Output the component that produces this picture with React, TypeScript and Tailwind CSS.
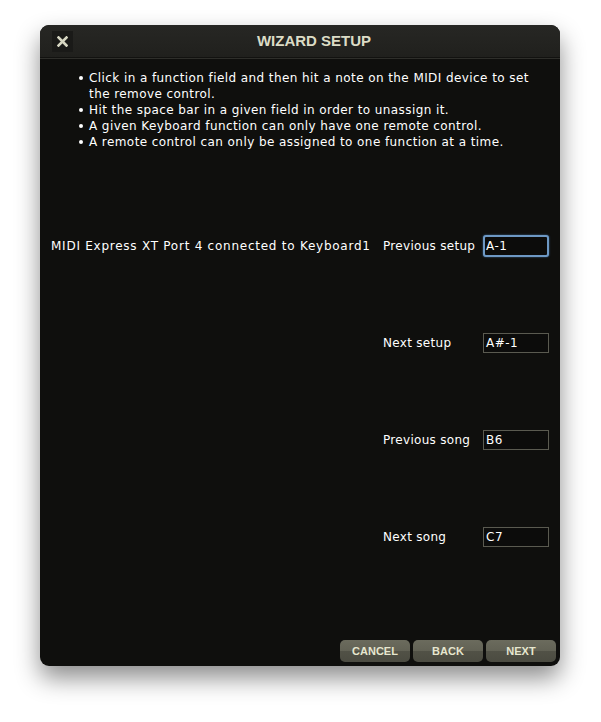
import React from 'react';

// ── Data ───────────────────────────────────────────────────────────────────────

const tips = [
  ['Click in a function field and then hit a note on the MIDI device to set', 'the remove control.'],
  ['Hit the space bar in a given field in order to unassign it.'],
  ['A given Keyboard function can only have one remote control.'],
  ['A remote control can only be assigned to one function at a time.'],
];

const fields = [
  { label: 'Previous setup', value: 'A-1', focused: true },
  { label: 'Next setup', value: 'A#-1' },
  { label: 'Previous song', value: 'B6' },
  { label: 'Next song', value: 'C7' },
];

const bodyFont = { fontFamily: '"DejaVu Sans", sans-serif' };

// ── Sub-components ─────────────────────────────────────────────────────────────

const FieldRow: React.FC<{ label: string; value: string; focused?: boolean }> = ({ label, value, focused }) => (
  <div className="flex items-center h-[22px]">
    <span className="w-[100px] text-[12px] text-white tracking-[0.3px]">{label}</span>
    <div
      className={
        focused
          ? 'w-[66px] h-[22px] flex items-center px-[1px] rounded-[3px] border-2 border-[#6d98c4] shadow-[0_0_2px_#3d6a99] bg-[#0c0c0b]'
          : 'w-[66px] h-[20px] flex items-center px-[2px] border border-[#5a5a50] bg-[#0c0c0b]'
      }
    >
      <span className="text-[12px] text-white tracking-[0.5px]">{value}</span>
    </div>
  </div>
);

const WizButton: React.FC<{ label: string }> = ({ label }) => (
  <button
    className="w-[70px] h-[22px] rounded-[5px] bg-[linear-gradient(#6b6b5d_0%,#626255_50%,#515146_52%,#4b4b41_100%)] text-[11px] font-bold text-[#e6e6cf]"
    style={{ fontFamily: '"Liberation Sans", Arial, sans-serif' }}
  >
    {label}
  </button>
);

// ── Main ───────────────────────────────────────────────────────────────────────

export default function App() {
  return (
    <div className="w-[601px] h-[722px] bg-white pl-[40px] pt-[25px]">
      <div className="w-[520px] h-[641px] rounded-[9px] bg-[#0f0f0d] shadow-[0_12px_24px_rgba(0,0,0,0.45)] flex flex-col overflow-hidden">
        {/* Title bar */}
        <div className="h-[33px] flex items-center px-[12px] bg-[linear-gradient(#272724,#20201d)] border-b border-[#121210] relative">
          <div className="w-[21px] h-[21px] bg-[#1a1a18] flex items-center justify-center">
            <svg width="11" height="11" viewBox="0 0 11 11">
              <path d="M1.5 1.5 L9.5 9.5 M9.5 1.5 L1.5 9.5" stroke="#d6d6c2" strokeWidth="2.6" strokeLinecap="square" />
            </svg>
          </div>
          <span
            className="absolute left-[28px] right-0 text-center text-[15px] font-bold text-[#dcdcc6] pointer-events-none"
            style={{ fontFamily: '"Liberation Sans", Arial, sans-serif' }}
          >
            WIZARD SETUP
          </span>
        </div>
        <div className="h-px bg-[#2e2e2a]" />

        {/* Tips */}
        <div className="pl-[39px] pt-[11px] text-[12px] leading-[16px] text-white tracking-[0.42px]" style={bodyFont}>
          {tips.map((t, i) => (
            <div key={i} className="flex">
              <span className="w-[10px] h-[16px] flex items-center">
                <span className="w-[4px] h-[4px] rounded-full bg-white" />
              </span>
              <div>
                {t.map((line, j) => (
                  <div key={j}>{line}</div>
                ))}
              </div>
            </div>
          ))}
        </div>

        {/* Assignment rows */}
        <div className="flex pl-[11px] pt-[85px]" style={bodyFont}>
          <div className="w-[332px] h-[22px] flex items-center text-[12px] text-white tracking-[0.75px]">
            MIDI Express XT Port 4 connected to Keyboard1
          </div>
          <div className="flex flex-col gap-[75px]">
            {fields.map((f) => (
              <FieldRow key={f.label} label={f.label} value={f.value} focused={f.focused} />
            ))}
          </div>
        </div>

        {/* Footer buttons */}
        <div className="mt-auto flex justify-end gap-[3px] pr-[4px] pb-[4px]">
          <WizButton label="CANCEL" />
          <WizButton label="BACK" />
          <WizButton label="NEXT" />
        </div>
      </div>
    </div>
  );
}
